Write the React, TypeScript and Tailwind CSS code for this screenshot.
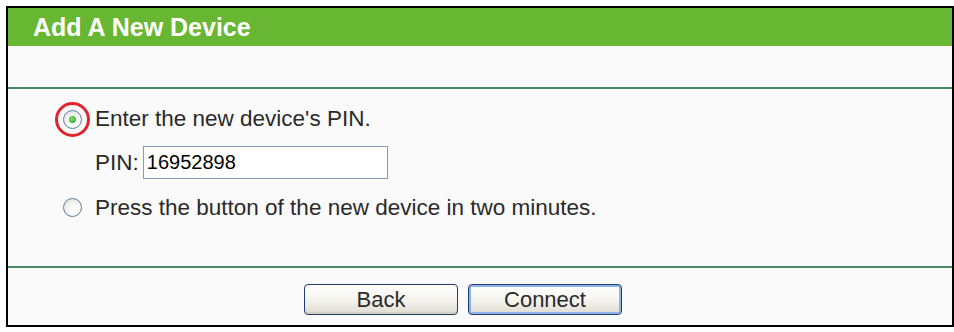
import React, { useState } from "react";

function Radio({ checked }: { checked: boolean }) {
  return (
    <span className="relative flex h-[19px] w-[19px] shrink-0 items-center justify-center rounded-full border-[1.5px] border-[#5a7ea3] bg-[radial-gradient(circle_at_65%_70%,#ffffff_20%,#dcdcd6_100%)]">
      {checked && (
        <span className="h-[7px] w-[7px] rounded-full bg-[radial-gradient(circle_at_40%_40%,#7ede6a,#219a21)]" />
      )}
    </span>
  );
}

function XpButton({ label, focused }: { label: string; focused?: boolean }) {
  return (
    <button
      className={`h-[31px] w-[154px] rounded-[4px] border border-[#1c3f6e] bg-gradient-to-b from-[#ffffff] via-[#f5f4ef] to-[#dedcd2] text-[22px] leading-none text-[#2a2a2a] ${
        focused ? "shadow-[inset_0_0_0_2px_#8fb2ea]" : "shadow-[inset_0_-2px_0_#d6d0c0]"
      }`}
    >
      {label}
    </button>
  );
}

export default function App() {
  const [mode, setMode] = useState<"pin" | "pbc">("pin");
  const [pin, setPin] = useState("16952898");

  return (
    <div className="min-h-[332px] bg-white pl-[6px] pt-[6px] font-['Liberation_Sans',Arial,sans-serif]">
      <div className="flex h-[321px] w-[948px] flex-col border-2 border-black bg-[#fafafa]">
        {/* Title bar */}
        <div className="flex h-[38px] items-center bg-[#67b733] pl-[25px]">
          <h1 className="text-[25px] font-bold leading-none text-white">Add A New Device</h1>
        </div>
        <div className="h-[41px]" />
        <div className="h-[2px] bg-[#4a8a63]" />

        {/* Options */}
        <div className="flex flex-1 flex-col pl-[55px] pt-[17px] text-[22.5px] text-[#2a2a2a]">
          <label className="flex h-[26px] items-center gap-[13px]" onClick={() => setMode("pin")}>
            <span className="relative">
              <Radio checked={mode === "pin"} />
              <span className="absolute -inset-[8px] rounded-full border-[3px] border-[#e0242c]" />
            </span>
            <span>Enter the new device's PIN.</span>
          </label>
          <div className="mt-[14px] flex items-center gap-[4px] pl-[32px]">
            <span>PIN:</span>
            <input
              value={pin}
              onChange={(e) => setPin(e.target.value)}
              className="h-[33px] w-[245px] border border-[#7f9db9] bg-white px-[3px] text-[20px] text-black outline-none"
            />
          </div>
          <label className="mt-[15px] flex h-[26px] items-center gap-[13px]" onClick={() => setMode("pbc")}>
            <Radio checked={mode === "pbc"} />
            <span>Press the button of the new device in two minutes.</span>
          </label>
        </div>

        <div className="h-[2px] bg-[#4a8a63]" />

        {/* Buttons */}
        <div className="flex h-[57px] items-start justify-center gap-[10px] pr-[34px] pt-[16px]">
          <XpButton label="Back" />
          <XpButton label="Connect" focused />
        </div>
      </div>
    </div>
  );
}
